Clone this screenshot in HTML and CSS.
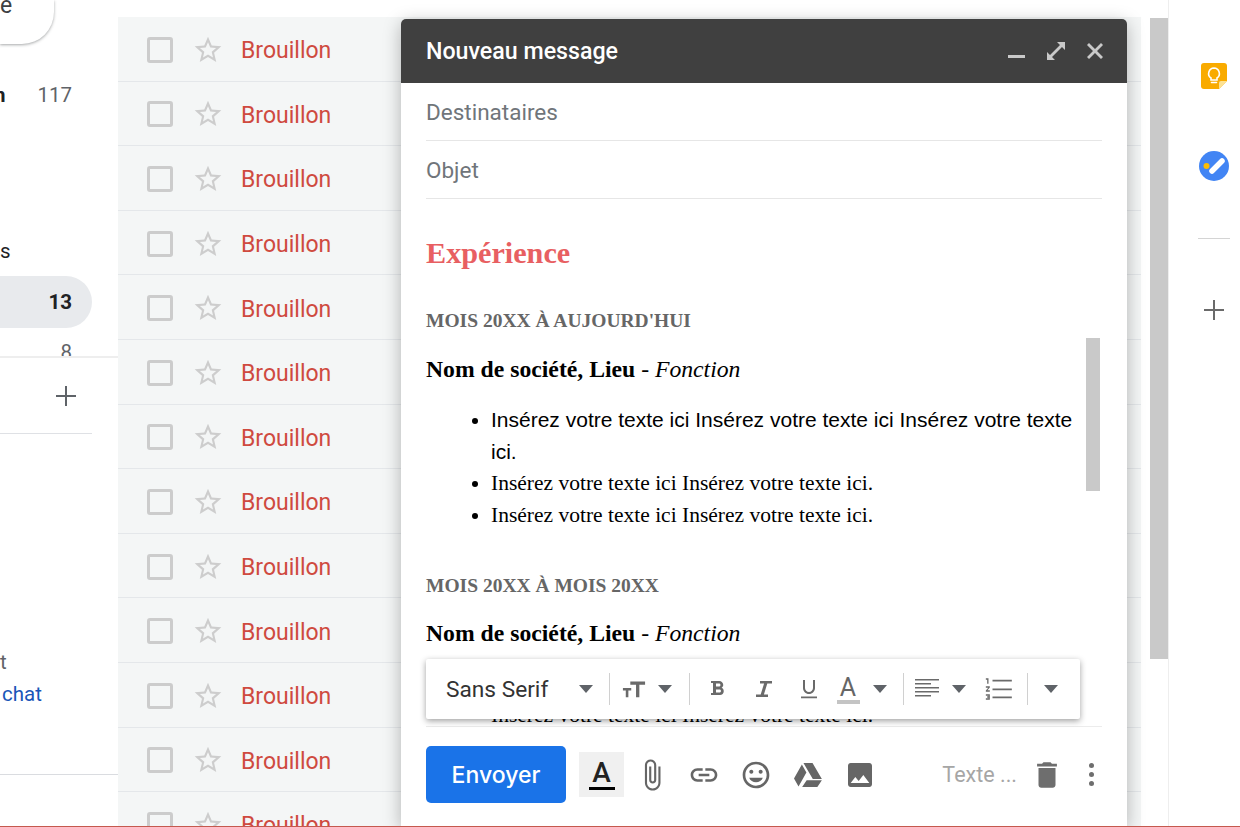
FILE: index.html
```html
<!DOCTYPE html>
<html lang="fr">
<head>
<meta charset="utf-8">
<title>Nouveau message</title>
<link rel="stylesheet" href="styles.css">
</head>
<body>
<svg class="defs" aria-hidden="true">
  <symbol id="star" viewBox="0 0 24 24"><path d="M22 9.24l-7.19-.62L12 2 9.19 8.63 2 9.24l5.46 4.73L5.82 21 12 17.27 18.18 21l-1.63-7.03L22 9.24zM12 15.4l-3.76 2.27 1-4.28-3.32-2.88 4.38-.38L12 6.1l1.71 4.04 4.38.38-3.32 2.88 1 4.28L12 15.4z"/></symbol>
  <symbol id="caret" viewBox="0 0 14 8"><path d="M0 0h14L7 8z"/></symbol>
  <symbol id="plus" viewBox="0 0 20 20"><path d="M9 0h2v9h9v2h-9v9H9v-9H0V9h9z"/></symbol>
</svg>
<div class="app">
  <aside class="sidebar">
    <div class="nav">
      <div class="compose-btn">e</div>
      <div class="nav-row first"><b class="frag cut">n</b><span class="count">117</span></div>
      <div class="nav-row spaced"><span class="frag">s</span></div>
      <div class="nav-row active"><b class="count">13</b></div>
      <div class="nav-row"><span class="count">8</span></div>
    </div>
    <div class="labels"><svg class="plus-icon"><use href="#plus"/></svg></div>
    <div class="chat">
      <div class="chat-line muted">t</div>
      <div class="chat-line link">chat</div>
    </div>
  </aside>

  <main class="list">
    <div class="row"><i class="check"></i><svg class="star"><use href="#star"/></svg><span class="draft">Brouillon</span></div>
    <div class="row"><i class="check"></i><svg class="star"><use href="#star"/></svg><span class="draft">Brouillon</span></div>
    <div class="row"><i class="check"></i><svg class="star"><use href="#star"/></svg><span class="draft">Brouillon</span></div>
    <div class="row"><i class="check"></i><svg class="star"><use href="#star"/></svg><span class="draft">Brouillon</span></div>
    <div class="row"><i class="check"></i><svg class="star"><use href="#star"/></svg><span class="draft">Brouillon</span></div>
    <div class="row"><i class="check"></i><svg class="star"><use href="#star"/></svg><span class="draft">Brouillon</span></div>
    <div class="row"><i class="check"></i><svg class="star"><use href="#star"/></svg><span class="draft">Brouillon</span></div>
    <div class="row"><i class="check"></i><svg class="star"><use href="#star"/></svg><span class="draft">Brouillon</span></div>
    <div class="row"><i class="check"></i><svg class="star"><use href="#star"/></svg><span class="draft">Brouillon</span></div>
    <div class="row"><i class="check"></i><svg class="star"><use href="#star"/></svg><span class="draft">Brouillon</span></div>
    <div class="row"><i class="check"></i><svg class="star"><use href="#star"/></svg><span class="draft">Brouillon</span></div>
    <div class="row"><i class="check"></i><svg class="star"><use href="#star"/></svg><span class="draft">Brouillon</span></div>
    <div class="row"><i class="check"></i><svg class="star"><use href="#star"/></svg><span class="draft">Brouillon</span></div>
  </main>

  <div class="track"><div class="thumb"></div></div>

  <aside class="rail">
    <svg class="keep" viewBox="0 0 26 26">
      <path d="M3 0h20a3 3 0 0 1 3 3v15l-8 8H3a3 3 0 0 1-3-3V3a3 3 0 0 1 3-3z" fill="#f9ab00"/>
      <path d="M18 26v-6a2 2 0 0 1 2-2h6z" fill="#fde293"/>
      <path d="M13 5a5.500 5.500 0 0 0-3 10v2h6v-2a5.500 5.500 0 0 0-3-10zM10.500 19.500h5" fill="none" stroke="#fff" stroke-width="1.600" stroke-linecap="round"/>
    </svg>
    <svg class="tasks" viewBox="0 0 30 30">
      <circle cx="15" cy="15" r="15" fill="#4285f4"/>
      <path d="M13 20L23 10" stroke="#fff" stroke-width="5.500" stroke-linecap="round"/>
      <circle cx="7.500" cy="15" r="3" fill="#fbbc04"/>
    </svg>
    <div class="rail-line"></div>
    <svg class="rail-plus"><use href="#plus"/></svg>
  </aside>

  <section class="compose">
    <header class="head">
      <span class="title">Nouveau message</span>
      <span class="head-slot"><svg class="h-icon" viewBox="0 0 20 20"><path d="M1 14h17v3H1z"/></svg></span>
      <span class="head-slot"><svg class="h-icon" viewBox="0 0 20 20"><path d="M11 1h8v8l-3-3L6 16l3 3H1v-8l3 3L14 4z"/></svg></span>
      <span class="head-slot"><svg class="h-icon" viewBox="0 0 20 20"><path d="M4 2l6 6 6-6 2 2-6 6 6 6-2 2-6-6-6 6-2-2 6-6-6-6z"/></svg></span>
    </header>
    <div class="field">Destinataires</div>
    <div class="field">Objet</div>
    <div class="body">
      <h1 class="exp-title">Expérience</h1>
      <h2 class="period">MOIS 20XX À AUJOURD'HUI</h2>
      <p class="job"><b>Nom de société, Lieu</b> - <em>Fonction</em></p>
      <ul class="tasks-list">
        <li class="sans">Insérez votre texte ici Insérez votre texte ici Insérez votre texte ici.</li>
        <li>Insérez votre texte ici Insérez votre texte ici.</li>
        <li>Insérez votre texte ici Insérez votre texte ici.</li>
      </ul>
      <h2 class="period second">MOIS 20XX À MOIS 20XX</h2>
      <p class="job"><b>Nom de société, Lieu</b> - <em>Fonction</em></p>
      <ul class="tasks-list last">
        <li>Insérez votre texte ici Insérez votre texte ici.</li>
      </ul>
      <div class="body-thumb"></div>
    </div>
    <footer class="foot">
      <button class="send">Envoyer</button>
      <span class="color-btn"><span class="color-a">A</span></span>
      <span class="slot"><svg class="f-icon clip" viewBox="0 0 24 24"><path d="M16.500 6v11.500c0 2.210-1.790 4-4 4s-4-1.790-4-4V5c0-1.380 1.120-2.500 2.500-2.500s2.500 1.120 2.500 2.500v10.500c0 .55-.45 1-1 1s-1-.45-1-1V6H10v9.500c0 1.380 1.120 2.500 2.500 2.500s2.500-1.120 2.500-2.500V5c0-2.210-1.790-4-4-4S7 2.790 7 5v12.500c0 3.040 2.460 5.500 5.500 5.500s5.500-2.460 5.500-5.500V6h-1.500z"/></svg></span>
      <span class="slot"><svg class="f-icon" viewBox="0 0 24 24"><path d="M3.900 12c0-1.710 1.390-3.100 3.100-3.100h4V7H7c-2.760 0-5 2.240-5 5s2.240 5 5 5h4v-1.900H7c-1.710 0-3.100-1.390-3.100-3.100zM8 13h8v-2H8v2zm9-6h-4v1.900h4c1.710 0 3.100 1.390 3.100 3.100s-1.390 3.100-3.100 3.100h-4V17h4c2.760 0 5-2.240 5-5s-2.240-5-5-5z"/></svg></span>
      <span class="slot"><svg class="f-icon" viewBox="0 0 24 24"><path d="M11.990 2C6.470 2 2 6.480 2 12s4.470 10 9.990 10C17.520 22 22 17.520 22 12S17.520 2 11.990 2zM12 20c-4.420 0-8-3.580-8-8s3.580-8 8-8 8 3.580 8 8-3.580 8-8 8zm3.500-9c.83 0 1.500-.67 1.500-1.500S16.330 8 15.500 8 14 8.670 14 9.500s.67 1.500 1.500 1.500zm-7 0c.83 0 1.500-.67 1.500-1.500S9.330 8 8.500 8 7 8.670 7 9.500 7.670 11 8.500 11zm3.500 6.500c2.330 0 4.310-1.460 5.110-3.500H6.890c.8 2.040 2.780 3.500 5.110 3.500z"/></svg></span>
      <span class="slot"><svg class="f-icon" viewBox="0 0 24 24"><path d="M8.600 3h6.800l7 12h-6.800zM7.400 4.200l3.400 5.900L4.900 20.600 1.500 14.700zM11 16h11.400l-3.400 5H7.600z"/></svg></span>
      <span class="slot"><svg class="f-icon" viewBox="0 0 24 24"><path d="M21 19V5c0-1.100-.9-2-2-2H5c-1.100 0-2 .9-2 2v14c0 1.100.9 2 2 2h14c1.100 0 2-.9 2-2zM8.500 13.500l2.500 3.010L14.500 12l4.500 6H5l3.500-4.500z"/></svg></span>
      <span class="saved">Texte ...</span>
      <span class="trash-slot"><svg class="trash" viewBox="0 0 24 24"><path d="M6 19c0 1.100.9 2 2 2h8c1.100 0 2-.9 2-2V7H6v12zM19 4h-3.500l-1-1h-5l-1 1H5v2h14V4z"/></svg></span>
      <span class="dots"><i></i><i></i><i></i></span>
    </footer>
    <div class="toolbar">
      <div class="tb g-font"><span class="font-name">Sans Serif</span><svg class="caret"><use href="#caret"/></svg></div>
      <div class="tb g-size">
        <svg class="t-icon" viewBox="0 0 26 20"><path d="M9 2h16v3.500h-6.200V19h-3.600V5.500H9zM1 9h9v2.600H6.900V19H4.100v-7.400H1z"/></svg>
        <svg class="caret"><use href="#caret"/></svg>
      </div>
      <div class="tb g-style">
        <svg class="t-icon" viewBox="0 0 24 24"><path d="M15.600 10.790c.97-.67 1.650-1.770 1.650-2.790 0-2.260-1.750-4-4-4H5v2h2v10H5v2h9.040c2.090 0 3.710-1.700 3.710-3.790 0-1.520-.86-2.820-2.150-3.420zM10 6.500h3c.83 0 1.500.67 1.500 1.500s-.67 1.500-1.500 1.500h-3v-3zm3.500 9H10v-3h3.500c.83 0 1.500.67 1.500 1.500s-.67 1.500-1.500 1.500z"/></svg>
        <svg class="t-icon" viewBox="0 0 24 24"><path d="M8 4h12v2.500h-4.700l-3.400 11H16V20H4v-2.500h4.700l3.400-11H8z"/></svg>
        <svg class="t-icon" viewBox="0 0 24 24"><path d="M12 17c3.310 0 6-2.690 6-6V3h-2v8c0 2.200-1.800 4-4 4s-4-1.800-4-4V3H6v8c0 3.310 2.690 6 6 6zm-8 2.500v1.800h16v-1.800z"/></svg>
        <span class="text-color">A</span>
        <svg class="caret"><use href="#caret"/></svg>
      </div>
      <div class="tb g-para">
        <svg class="t-icon" viewBox="0 0 24 24"><path d="M0 2h24v1.600H0zM0 6h16v1.600H0zM0 10h24v1.600H0zM0 14h24v1.600H0zM0 18h16v1.600H0z"/></svg>
        <svg class="caret"><use href="#caret"/></svg>
        <svg class="t-icon numbered" viewBox="1.500 3 20 18"><path d="M2 17h2v.5H3v1h1v.5H2v1h3v-4H2v1zm1-9h1V4H2v1h1v3zm-1 3h1.800L2 13.100v.9h3v-1H3.200L5 10.900V10H2v1zm5-6v1.400h14.500V5zm0 14h14.500v-1.400H7zm0-6h14.500v-1.400H7z"/></svg>
      </div>
      <div class="tb g-more"><svg class="caret"><use href="#caret"/></svg></div>
    </div>
  </section>
</div>
</body>
</html>
```
FILE: styles.css
```css
* { box-sizing: border-box; }
html, body { margin: 0; height: 100%; overflow: hidden; background: #fff; }
body { font-family: Roboto, "Liberation Sans", sans-serif; color: #202124; }
svg { display: block; }
.defs { position: absolute; width: 0; height: 0; }

.app {
  position: relative;
  display: grid;
  grid-template-columns: 118px 1023px 9px 19px 71px;
  height: 827px;
  overflow: hidden;
  border-bottom: 1px solid #c5594e;
}

/* left navigation */
.sidebar { display: flex; flex-direction: column; overflow: hidden; }
.nav {
  height: 358px;
  overflow: hidden;
  border-bottom: 2px solid #eeeeee;
  font-size: 20.500px;
}
.compose-btn {
  width: 54px;
  height: 44px;
  line-height: 12px;
  font-size: 23px;
  color: #3c4043;
  border-radius: 0 0 32px 0;
  box-shadow: 0 1px 3px rgba(60, 64, 67, .45);
}
.nav-row {
  width: 92px;
  height: 52px;
  padding-right: 20px;
  display: flex;
  align-items: center;
  justify-content: space-between;
  border-radius: 0 26px 26px 0;
}
.nav-row.first { margin-top: 25px; }
.nav-row.spaced { margin-top: 104px; height: 51px; }
.nav-row.active { background: #e8eaed; height: 52px; justify-content: flex-end; }
.nav-row:last-child { justify-content: flex-end; height: 48px; color: #5f6368; }
.frag { color: #202124; }
.frag.cut { margin-left: -6px; }
.count { margin-left: auto; color: #5f6368; }
.active .count { color: #202124; }
.labels {
  width: 92px;
  height: 76px;
  border-bottom: 1px solid #dfe1e5;
  padding: 28px 16px 0 0;
  display: flex;
  justify-content: flex-end;
}
.plus-icon { width: 20px; height: 20px; fill: #5f6368; }
.chat {
  height: 341px;
  padding-top: 212px;
  border-bottom: 1px solid #dadce0;
  font-size: 20.500px;
}
.chat-line { height: 32px; line-height: 32px; }
.muted { color: #5f6368; }
.link { color: #1a56b8; padding-left: 2px; }

/* message list */
.list { margin-top: 17px; overflow: hidden; }
.row {
  height: 64.600px;
  padding-top: 2px;
  display: flex;
  align-items: center;
  background: #f4f6f6;
  border-bottom: 1.500px solid #e4e7ea;
}
.check {
  width: 26px;
  height: 26px;
  margin-left: 29px;
  border: 3px solid #cccccc;
  border-radius: 3px;
}
.star { width: 32px; height: 32px; margin-left: 19px; fill: #cdcdcd; }
.draft { margin: 2px 0 0 17px; font-size: 23px; color: #cf4a3f; }

/* page scrollbar */
.track { grid-column: 4; border-right: 1px solid #eeeeee; }
.thumb { margin-top: 18px; height: 641px; background: #c9c9c9; }

/* right rail */
.rail { display: flex; flex-direction: column; align-items: center; padding-left: 19px; }
.keep { width: 26px; height: 26px; margin-top: 63px; }
.tasks { width: 30px; height: 30px; margin-top: 62px; }
.rail-line { width: 32px; height: 1px; background: #d4d4d4; margin-top: 57px; }
.rail-plus { width: 20px; height: 20px; margin-top: 61px; fill: #6a6a6a; }

/* compose window */
.compose {
  position: absolute;
  left: 401px;
  top: 19px;
  bottom: 0;
  width: 726px;
  display: flex;
  flex-direction: column;
  background: #fff;
  border-radius: 5px 5px 0 0;
  box-shadow: 0 4px 18px rgba(0, 0, 0, .28);
}
.head {
  height: 64px;
  flex: none;
  display: flex;
  align-items: center;
  padding: 0 13px 0 25px;
  background: #404040;
  border-radius: 5px 5px 0 0;
}
.title { margin-right: auto; color: #fff; font-size: 23.200px; font-weight: 500; }
.head-slot { width: 39px; display: flex; justify-content: center; }
.h-icon { width: 20px; height: 20px; fill: #c9c9c9; }
.field {
  flex: none;
  height: 58px;
  margin: 0 25px;
  line-height: 58px;
  border-bottom: 1px solid #e6e6e6;
  font-size: 22.500px;
  color: #70757a;
}
.body {
  position: relative;
  flex: 1;
  min-height: 0;
  overflow: hidden;
  padding: 0 45px 0 25px;
  font-family: "Liberation Serif", serif;
  color: #000;
}
.exp-title {
  margin: 36px 0 0;
  font-size: 30.200px;
  line-height: 36px;
  color: #e85f62;
}
.period {
  margin: 38px 0 0;
  font-size: 19.500px;
  line-height: 24px;
  color: #666666;
}
.period.second { margin-top: 43px; }
.job { margin: 21px 0 0; font-size: 23.700px; line-height: 30px; }
.second + .job { margin-top: 20px; }
.tasks-list {
  margin: 21px 0 0;
  padding: 0 0 0 65px;
  font-size: 21.500px;
  line-height: 31.500px;
}
.tasks-list.last { margin-top: 52px; }
.sans { margin: -1px 0 1px; font-family: "Liberation Sans", sans-serif; font-size: 21px; }
.body-thumb {
  position: absolute;
  top: 139px;
  right: 27px;
  width: 14px;
  height: 153px;
  background: #c9c9c9;
}
.foot {
  flex: none;
  height: 100px;
  margin: 0 25px;
  padding-top: 19px;
  display: flex;
  align-items: flex-start;
  border-top: 1px solid #ececec;
}
.send {
  width: 140px;
  height: 57px;
  border: 0;
  border-radius: 5px;
  background: #1a73e8;
  color: #fff;
  font-family: Inter, Roboto, sans-serif;
  font-size: 23px;
  font-weight: 500;
}
.color-btn {
  width: 45px;
  height: 45px;
  margin: 6px 2px 0 13px;
  background: #f0f0f0;
  display: flex;
  justify-content: center;
  align-items: center;
}
.color-a {
  width: 26px;
  border-bottom: 3px solid #000;
  font-size: 28px;
  font-weight: 500;
  line-height: 28px;
  text-align: center;
  color: #222;
}
.slot { width: 52px; height: 57px; display: flex; align-items: center; justify-content: center; }
.f-icon { width: 32px; height: 32px; fill: #666666; }
.f-icon.clip { width: 34px; height: 34px; }
.saved { margin-left: auto; height: 57px; line-height: 57px; font-size: 21.500px; color: #a6a6a6; white-space: nowrap; }
.trash-slot { width: 48px; height: 57px; margin-left: 6px; display: flex; align-items: center; justify-content: center; }
.trash { width: 34px; height: 34px; fill: #6e6e6e; }
.dots {
  width: 22px;
  height: 57px;
  margin-left: 9px;
  display: flex;
  flex-direction: column;
  align-items: center;
  justify-content: center;
  gap: 4px;
}
.dots i { width: 5px; height: 5px; border-radius: 50%; background: #6e6e6e; }

/* format toolbar */
.toolbar {
  position: absolute;
  left: 25px;
  bottom: 107px;
  width: 654px;
  height: 60px;
  display: flex;
  align-items: center;
  background: #fff;
  border-radius: 2px;
  box-shadow: 0 2px 6px rgba(0, 0, 0, .38);
}
.tb { height: 32px; display: grid; align-items: center; justify-items: center; border-left: 1.500px solid #d0d0d0; }
.caret { width: 14px; height: 8px; fill: #5f6368; }
.t-icon { width: 24px; height: 24px; fill: #6a6a6a; }
.t-icon.numbered { width: 27px; height: 24px; }
.g-font { width: 183px; border-left: 0; display: flex; justify-content: space-between; padding: 0 16px 0 20px; }
.font-name { font-size: 22.700px; color: #333; }
.g-size { width: 80px; grid-template-columns: 34px 28px; padding-left: 7px; justify-content: start; }
.g-style { width: 214px; grid-template-columns: 46px 46px 44px 34px 30px; padding-left: 5px; justify-content: start; }
.g-para { width: 124px; grid-template-columns: 32px 32px 46px; padding-left: 7px; justify-content: start; }
.g-more { width: 53px; grid-template-columns: 20px; padding-left: 13px; justify-content: start; }
.text-color {
  width: 23px;
  border-bottom: 4px solid #c4c4c4;
  font-size: 25px;
  line-height: 25px;
  text-align: center;
  color: #666;
}
```
